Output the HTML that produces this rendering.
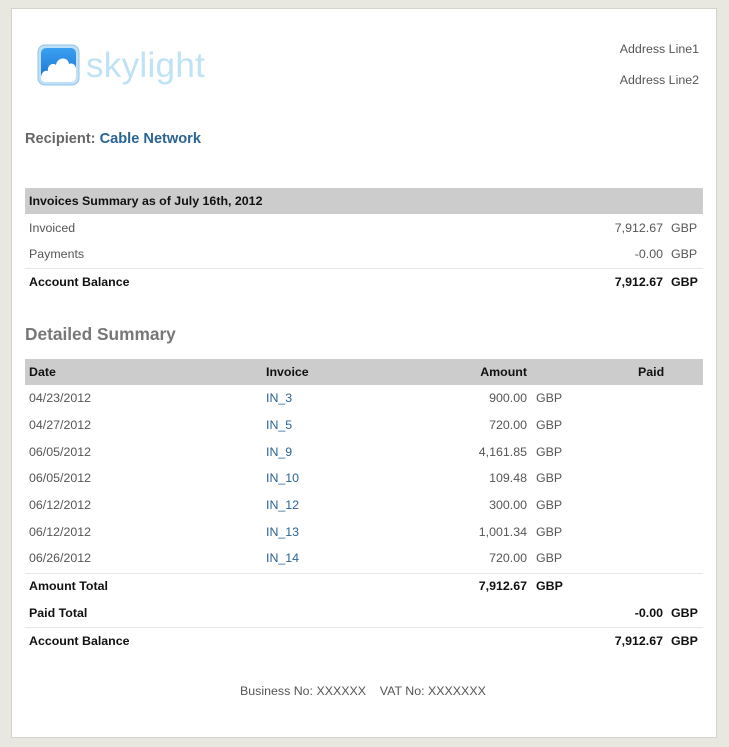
<!DOCTYPE html>
<html><head><meta charset="utf-8"><style>
body{margin:0;background:#e8e8e0;width:729px;height:747px;position:relative;overflow:hidden;font-family:"Liberation Sans",Arial,sans-serif;font-size:12.4px;color:#555}
.pg{position:absolute;left:11px;top:8px;width:704px;height:728px;background:#fff;border:1px solid #d4d4cc}
.t{position:absolute;line-height:14px;white-space:nowrap}
.r{text-align:right}
.b{font-weight:bold;color:#111}
.a{color:#2a6496}
.bar{position:absolute;left:25px;width:678px;height:26px;background:#cccccc}
.ln{position:absolute;left:25px;width:678px;height:1px;background:#e6e6e6}
</style></head><body>
<div class="pg"></div>
<svg style="position:absolute;left:37px;top:44px" width="44" height="43" viewBox="0 0 44 43">
<defs><linearGradient id="g" x1="0" y1="0" x2="0" y2="1"><stop offset="0" stop-color="#3aa0f0"/><stop offset="1" stop-color="#1a6fd0"/></linearGradient></defs>
<rect x="1" y="1" width="41" height="40" rx="7" fill="#bfe0f6" stroke="#8fc4ea"/>
<rect x="4" y="4" width="35" height="34" rx="5" fill="url(#g)"/>
<path d="M4 34 C4 28 8 26 11 27 C10 21 16 18 19 21 C20 13 31 12 32 20 C36 18 40 22 39 27 L39 33 Q39 38 34 38 L9 38 Q4 38 4 34 Z" fill="#fff"/>
</svg>
<div class="t" style="left:86px;top:45px;font-size:35px;line-height:42px;color:#bfe2f4;letter-spacing:0.3px">skylight</div>
<div class="t" style="right:30px;top:42px;">Address Line1</div>
<div class="t" style="right:30px;top:73px;">Address Line2</div>
<div class="t" style="left:25px;top:132px;font-size:14.6px;font-weight:bold;color:#666">Recipient: <span style="color:#2a6496">Cable Network</span></div>

<div class="bar" style="top:188px"></div>
<div class="t b" style="left:29px;top:194px">Invoices Summary as of July 16th, 2012</div>
<div class="t" style="left:29px;top:221px">Invoiced</div>
<div class="t r" style="right:66px;top:221px">7,912.67</div><div class="t" style="left:671px;top:221px">GBP</div>
<div class="t" style="left:29px;top:247px">Payments</div>
<div class="t r" style="right:66px;top:247px">-0.00</div><div class="t" style="left:671px;top:247px">GBP</div>
<div class="ln" style="top:268px"></div>
<div class="t b" style="left:29px;top:275px">Account Balance</div>
<div class="t b r" style="right:66px;top:275px">7,912.67</div><div class="t b" style="left:671px;top:275px">GBP</div>

<div class="t" style="left:25px;top:324px;font-size:17.3px;line-height:20px;font-weight:bold;color:#777">Detailed Summary</div>

<div class="bar" style="top:359px"></div>
<div class="t b" style="left:29px;top:365px">Date</div>
<div class="t b" style="left:266px;top:365px">Invoice</div>
<div class="t b r" style="right:202px;top:365px">Amount</div>
<div class="t b" style="left:638px;top:365px">Paid</div>

<div class="t" style="left:29px;top:391px">04/23/2012</div><div class="t a" style="left:266px;top:391px">IN_3</div><div class="t r" style="right:202px;top:391px">900.00</div><div class="t" style="left:536px;top:391px">GBP</div>
<div class="t" style="left:29px;top:418px">04/27/2012</div><div class="t a" style="left:266px;top:418px">IN_5</div><div class="t r" style="right:202px;top:418px">720.00</div><div class="t" style="left:536px;top:418px">GBP</div>
<div class="t" style="left:29px;top:445px">06/05/2012</div><div class="t a" style="left:266px;top:445px">IN_9</div><div class="t r" style="right:202px;top:445px">4,161.85</div><div class="t" style="left:536px;top:445px">GBP</div>
<div class="t" style="left:29px;top:471px">06/05/2012</div><div class="t a" style="left:266px;top:471px">IN_10</div><div class="t r" style="right:202px;top:471px">109.48</div><div class="t" style="left:536px;top:471px">GBP</div>
<div class="t" style="left:29px;top:498px">06/12/2012</div><div class="t a" style="left:266px;top:498px">IN_12</div><div class="t r" style="right:202px;top:498px">300.00</div><div class="t" style="left:536px;top:498px">GBP</div>
<div class="t" style="left:29px;top:525px">06/12/2012</div><div class="t a" style="left:266px;top:525px">IN_13</div><div class="t r" style="right:202px;top:525px">1,001.34</div><div class="t" style="left:536px;top:525px">GBP</div>
<div class="t" style="left:29px;top:551px">06/26/2012</div><div class="t a" style="left:266px;top:551px">IN_14</div><div class="t r" style="right:202px;top:551px">720.00</div><div class="t" style="left:536px;top:551px">GBP</div>
<div class="ln" style="top:573px"></div>
<div class="t b" style="left:29px;top:579px">Amount Total</div>
<div class="t b r" style="right:202px;top:579px">7,912.67</div><div class="t b" style="left:536px;top:579px">GBP</div>
<div class="t b" style="left:29px;top:606px">Paid Total</div>
<div class="t b r" style="right:66px;top:606px">-0.00</div><div class="t b" style="left:671px;top:606px">GBP</div>
<div class="ln" style="top:627px"></div>
<div class="t b" style="left:29px;top:634px">Account Balance</div>
<div class="t b r" style="right:66px;top:634px">7,912.67</div><div class="t b" style="left:671px;top:634px">GBP</div>

<div class="t" style="left:240px;top:684px">Business No: XXXXXX &nbsp;&nbsp;&nbsp;VAT No: XXXXXXX</div>
</body></html>
